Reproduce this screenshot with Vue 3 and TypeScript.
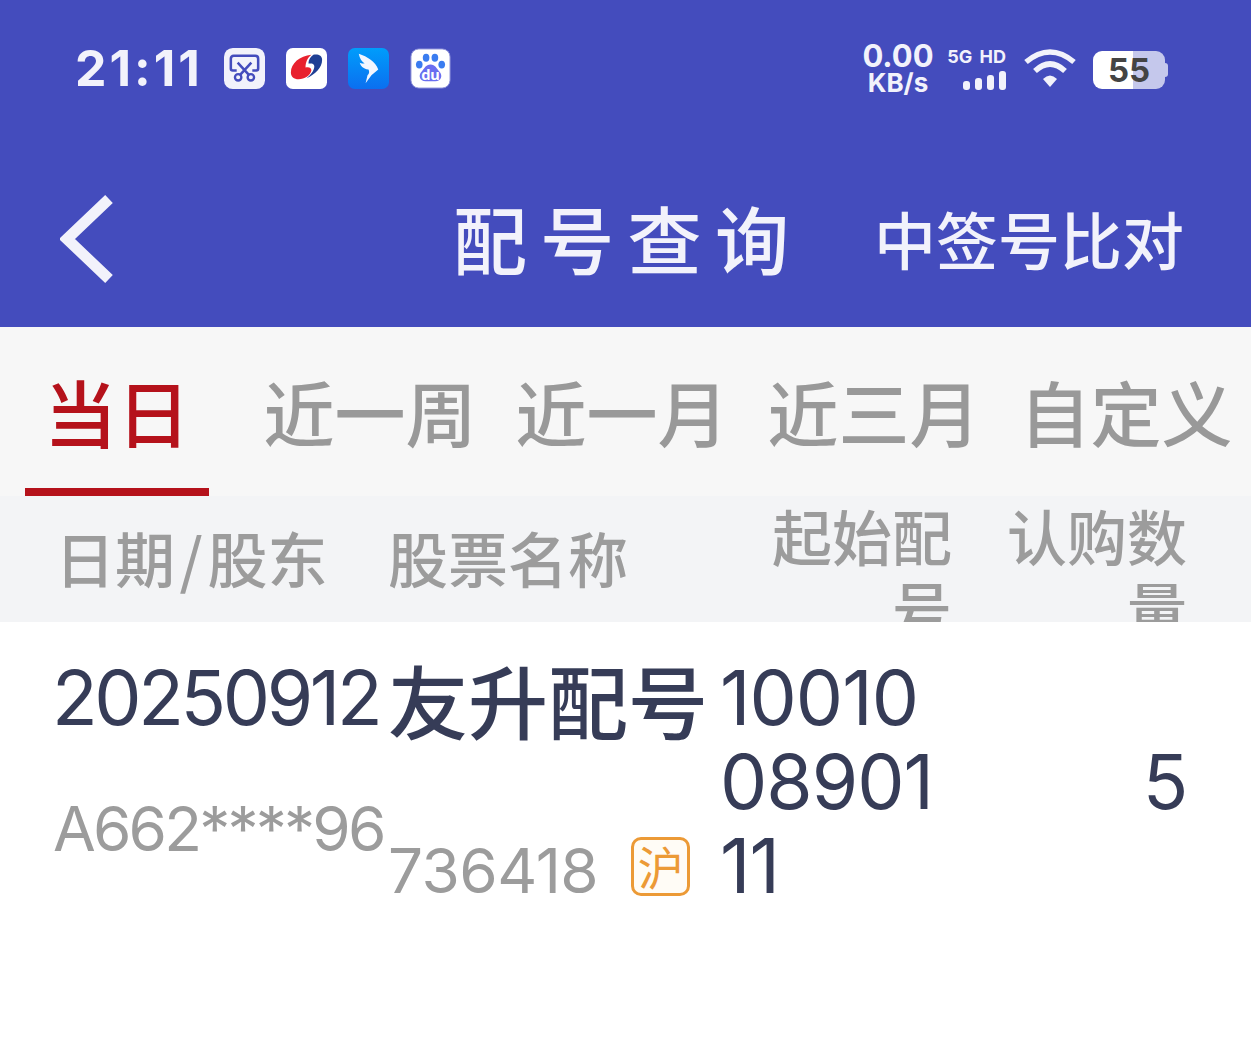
<script setup lang="ts">
const tabs = ['当日', '近一周', '近一月', '近三月', '自定义']
const startNo = '100100890111'
// the column only fits five digits per line
const startLines = startNo.match(/.{1,5}/g) ?? []
</script>

<template>
  <div class="page">
    <header class="top">
      <div class="status">
        <div class="status-left">
          <span class="clock">21:11</span>
          <svg class="app" viewBox="0 0 42 42">
            <rect width="42" height="42" rx="9" fill="#f2f2fb" />
            <path d="M13 23H9q-2 0-2-2V11q0-3 3-3h22q3 0 3 3v10q0 2-2 2h-4" fill="none" stroke="#444cbd" stroke-width="2.6" />
            <path d="M14 15l12 13M28 15L16 28" fill="none" stroke="#444cbd" stroke-width="2.6" />
            <circle cx="14.500" cy="30" r="3.300" fill="none" stroke="#444cbd" stroke-width="2.400" />
            <circle cx="27.500" cy="30" r="3.300" fill="none" stroke="#444cbd" stroke-width="2.400" />
          </svg>
          <svg class="app" viewBox="0 0 42 42">
            <rect width="42" height="42" rx="7" fill="#fff" />
            <path d="M26 7C14 8 5 16 5 25c0 4 3 7 8 7 6 0 12-4 13-9 0-3-3-4-6-3 0-5 2-10 6-13z" fill="#e8212e" />
            <path d="M28 7c5-1 9 1 9 5 0 8-7 15-16 19 4-3 8-8 8-12 0-3-3-3-6-3 0-4 2-7 5-9z" fill="#1f3f94" />
          </svg>
          <svg class="app" viewBox="0 0 42 42">
            <defs>
              <linearGradient id="feishu" x1="0" y1="0" x2="0" y2="1">
                <stop offset="0" stop-color="#009dfb" />
                <stop offset="1" stop-color="#0b6ff0" />
              </linearGradient>
            </defs>
            <rect width="42" height="42" rx="7" fill="url(#feishu)" />
            <path d="M11 6c9 3 17 8 20 16l-7 6-6 8 2-8c2-2 2-4 1-6-6-1-8-4-9-7 2 1 3 1 5 1-3-2-5-5-6-10z" fill="#f2f6ff" />
          </svg>
          <svg class="app" viewBox="0 0 42 42">
            <rect width="40" height="40" x="1" y="1" rx="8" fill="#fff" stroke="#8f93da" stroke-width="1" />
            <ellipse cx="9.500" cy="17" rx="3.400" ry="4" fill="#3a7cf0" />
            <ellipse cx="32.500" cy="17" rx="3.400" ry="4" fill="#3a7cf0" />
            <ellipse cx="16.500" cy="10" rx="3.400" ry="4" fill="#3a7cf0" />
            <ellipse cx="25.500" cy="10" rx="3.400" ry="4" fill="#3a7cf0" />
            <path d="M21 17c5 0 6 4 9 7 4 4 2 10-4 10H16c-6 0-8-6-4-10 3-3 4-7 9-7z" fill="#6a6ef0" />
            <text x="21" y="33" class="du">du</text>
          </svg>
        </div>
        <div class="status-right">
          <div class="speed">
            <span class="speed-num">0.00</span>
            <span class="speed-unit">KB/s</span>
          </div>
          <div class="signal">
            <span class="signal-text">5G HD</span>
            <div class="bars">
              <i style="height: 9px"></i>
              <i style="height: 12px"></i>
              <i style="height: 15px"></i>
              <i style="height: 19px"></i>
            </div>
          </div>
          <svg class="wifi" viewBox="0 0 52 40">
            <path d="M2 14Q26-6 50 14" fill="none" stroke="#f2f2fb" stroke-width="5.500" />
            <path d="M11 23Q26 9 41 23" fill="none" stroke="#f2f2fb" stroke-width="5.500" />
            <path d="M19 31Q26 24 33 31l-7 8z" fill="#f2f2fb" />
          </svg>
          <div class="battery">
            <div class="battery-body"><span>55</span></div>
            <i class="battery-tip"></i>
          </div>
        </div>
      </div>
      <div class="nav">
        <svg class="back" viewBox="0 0 54 90">
          <path d="M49 4L7 44l42 40" fill="none" stroke="#f2f2fb" stroke-width="11" />
        </svg>
        <span class="title">配号查询</span>
        <span class="compare">中签号比对</span>
      </div>
    </header>

    <nav class="tabs">
      <div v-for="(t, i) in tabs" :key="t" :class="['tab', { active: i === 0 }]">{{ t }}</div>
    </nav>

    <div class="thead cols">
      <div class="th">日期<span class="slash">/</span>股东</div>
      <div class="th">股票名称</div>
      <div class="th wrap">起始配号</div>
      <div class="th wrap">认购数量</div>
    </div>

    <div class="row cols">
      <div class="cell">
        <div class="big">20250912</div>
        <div class="sub">A662****96</div>
      </div>
      <div class="cell">
        <div class="name">友升配号</div>
        <div class="code">
          <span>736418</span>
          <em class="tag">沪</em>
        </div>
      </div>
      <div class="start">
        <div v-for="line in startLines" :key="line">{{ line }}</div>
      </div>
      <div class="qty">5</div>
    </div>
  </div>
</template>

<style>
html, body { margin: 0; background: #fff; }
</style>

<style scoped>
.page {
  width: 1251px;
  height: 1058px;
  overflow: hidden;
  background: #fff;
  font-family: "Noto Sans CJK SC", "Noto Sans", sans-serif;
}
.top { height: 327px; background: #444cbd; color: #f2f2fb; display: flex; flex-direction: column; }
.status { display: flex; justify-content: space-between; align-items: center; height: 136px; padding: 0 83px 0 75px; font-family: Inter, sans-serif; }
.status-left { display: flex; align-items: center; gap: 21px; }
.clock { font-size: 50px; font-weight: 700; line-height: 1; letter-spacing: 3px; margin-right: 0; }
.app { width: 41px; height: 41px; }
.du { font: 700 15px "Noto Sans", sans-serif; fill: #fff; text-anchor: middle; }
.status-right { display: flex; align-items: center; }
.speed { display: flex; flex-direction: column; align-items: center; width: 72px; font-weight: 700; margin: 2px 2px 0 -2px; }
.speed-num { font-size: 31px; line-height: 28px; }
.speed-unit { font-size: 26px; line-height: 26px; }
.signal { display: flex; flex-direction: column; align-items: flex-end; margin-left: 14px; width: 56px; }
.signal-text { font-size: 18px; font-weight: 700; line-height: 22px; white-space: nowrap; word-spacing: 3px; }
.bars { display: flex; align-items: flex-end; gap: 5px; height: 20px; margin-top: 2px; }
.bars i { width: 7px; background: #f2f2fb; border-radius: 3px; }
.wifi { width: 52px; height: 40px; margin-left: 18px; }
.battery { display: flex; align-items: center; margin-left: 17px; margin-top: 4px; }
.battery-body {
  width: 72px;
  height: 38px;
  border-radius: 9px;
  background: linear-gradient(90deg, #fff 55%, #c5c8ec 55%);
  display: flex;
  align-items: center;
  justify-content: center;
  color: #444;
  font-size: 33px;
  font-weight: 700;
  line-height: 1;
}
.battery-tip { width: 3px; height: 14px; background: #c5c8ec; border-radius: 0 3px 3px 0; }
.nav { flex: 1; display: flex; align-items: center; padding: 17px 67px 0 60px; }
.back { width: 54px; height: 90px; }
.title { font-size: 74px; font-weight: 500; letter-spacing: 13.300px; margin: 0 0 6px 339px; line-height: 1; }
.compare { font-size: 62px; font-weight: 500; margin: 0 0 4px auto; line-height: 1; }
.tabs { height: 169px; background: #f7f7f7; display: grid; grid-template-columns: 218px 252px 252px 252px 1fr; padding-left: 25px; box-sizing: border-box; }
.tab { display: flex; align-items: center; justify-content: center; font-size: 71px; font-weight: 500; color: #999; padding: 0 0 4px 2px; box-sizing: border-box; }
.tab:last-child { padding-left: 2px; white-space: nowrap; }
.tab.active { color: #b5121b; font-size: 73px; border-bottom: 8px solid #b5121b; padding: 4px 0 0; width: 184px; }
.cols { display: grid; grid-template-columns: 333px 332px 230px 235px; padding-left: 55px; }
.thead { height: 126px; overflow: hidden; background: #f3f4f6; color: #9c9c9c; font-size: 60px; font-weight: 500; line-height: 72px; }
.th { min-width: 0; padding-top: 25px; }
.th.wrap { text-align: right; padding-top: 3px; margin-right: -2px; }
.slash { padding: 0 4.500px; }
.row { color: #363c57; padding-top: 34px; }
.cell { min-width: 0; }
.big, .start, .qty { font-family: Inter, sans-serif; font-size: 75px; line-height: 84px; letter-spacing: -3.4px; }
.big { margin-left: -3px; }
.sub { font-family: Inter, sans-serif; font-size: 62px; line-height: 72px; letter-spacing: -2.800px; color: #9c9c9c; margin: 53px 0 0 -2px; }
.name { font-size: 80px; line-height: 84px; font-weight: 500; }
.code { display: flex; align-items: center; font-family: Inter, sans-serif; font-size: 62px; line-height: 72px; letter-spacing: -0.5px; color: #9c9c9c; margin-top: 95px; }
.tag {
  width: 59px;
  height: 59px;
  box-sizing: border-box;
  margin: -10px 0 0 33px;
  border: 3px solid #ec9a36;
  border-radius: 10px;
  background: #fffcf6;
  color: #ec9a36;
  font-family: "Noto Sans CJK SC", sans-serif;
  font-size: 46px;
  font-style: normal;
  font-weight: 400;
  letter-spacing: 0;
  line-height: 50px;
  text-align: center;
}
.start { letter-spacing: -1px; }
.qty { text-align: right; align-self: center; }
</style>
